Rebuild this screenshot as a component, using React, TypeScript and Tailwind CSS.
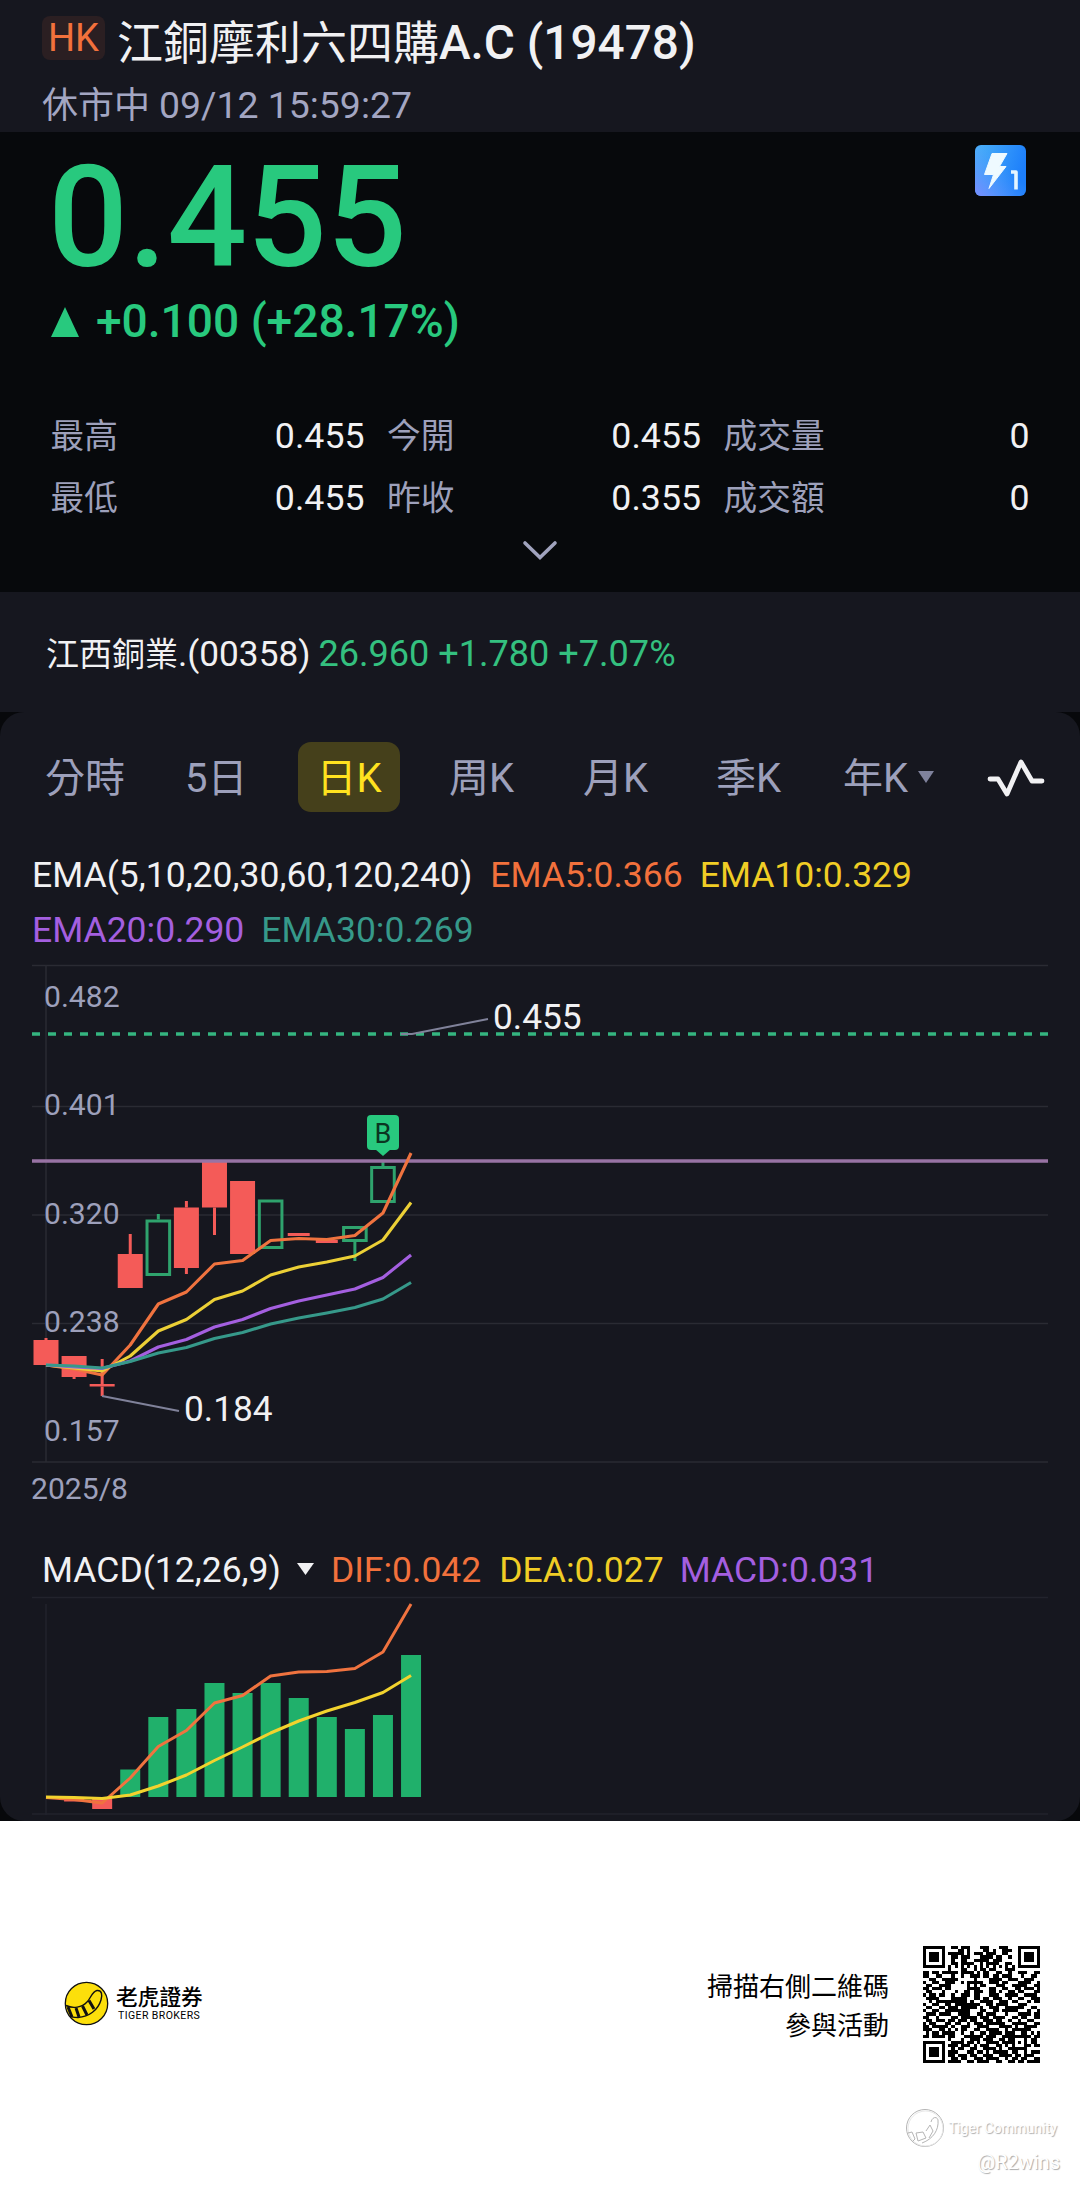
import React from 'react';

const STATS = [
  { label: '最高', value: '0.455' },
  { label: '今開', value: '0.455' },
  { label: '成交量', value: '0' },
  { label: '最低', value: '0.455' },
  { label: '昨收', value: '0.355' },
  { label: '成交額', value: '0' },
];

const STEP = 28.08;
const cx = (i: number) => 46 + i * STEP;

type Candle = { i: number; top: number; bottom: number; high?: number; low?: number; up?: boolean };

const CANDLES: Candle[] = [
  { i: 0, top: 1340, bottom: 1365, high: 1338 },
  { i: 1, top: 1356, bottom: 1377, low: 1379 },
  { i: 2, top: 1384, bottom: 1386.5, high: 1359, low: 1396 },
  { i: 3, top: 1254, bottom: 1288, high: 1234 },
  { i: 4, top: 1219.5, bottom: 1276, high: 1214, up: true },
  { i: 5, top: 1207.5, bottom: 1268, high: 1201, low: 1274 },
  { i: 6, top: 1162, bottom: 1207.5, low: 1235 },
  { i: 7, top: 1181, bottom: 1254 },
  { i: 8, top: 1199.5, bottom: 1249, up: true },
  { i: 9, top: 1233, bottom: 1236 },
  { i: 10, top: 1240, bottom: 1243 },
  { i: 11, top: 1226, bottom: 1242, low: 1261, up: true },
  { i: 12, top: 1166, bottom: 1203, high: 1161, up: true },
];

const EMA_LINES = [
  { color: '#f0733f', ys: [1365, 1369, 1375, 1345, 1304, 1292, 1264, 1260.5, 1240.5, 1238.5, 1239.5, 1235.5, 1213, 1153] },
  { color: '#ecd036', ys: [1365, 1368, 1371, 1356, 1331, 1319.5, 1299.5, 1291, 1275, 1267, 1262, 1256, 1240, 1202.5] },
  { color: '#a45fe0', ys: [1365, 1367, 1368.5, 1361, 1347, 1339.5, 1327, 1319.5, 1308.5, 1301, 1295, 1289, 1277.5, 1255] },
  { color: '#36998a', ys: [1365, 1366, 1368, 1361.5, 1353, 1347.5, 1338.5, 1332.5, 1324, 1318, 1313, 1307.5, 1299, 1282.5] },
];

const AXIS = [
  { y: 1006.5, text: '0.482' },
  { y: 1115, text: '0.401' },
  { y: 1224, text: '0.320' },
  { y: 1331.5, text: '0.238' },
  { y: 1440.5, text: '0.157' },
];

const MACD_TOPS = [1769.5, 1717, 1709, 1683, 1693, 1683, 1698, 1717, 1729, 1715, 1655];
const DIF = [1797.5, 1799.5, 1803, 1778, 1746.5, 1730.5, 1703, 1695.5, 1676, 1672, 1671.5, 1668.5, 1652, 1604];
const DEA = [1797, 1797.5, 1798.5, 1795, 1786, 1775, 1760.5, 1747, 1733, 1721, 1711, 1702.5, 1692.5, 1675.5];

const QR = [
  '1111111001101110001110001110001111111',
  '1000001000011010000110100111001000001',
  '1011101011111010111011100110001011101',
  '1011101001101110001111011001001011101',
  '1011101001001100111110111000001011101',
  '1000001001101111001011110011001000001',
  '1111111010101010101010101010101111111',
  '0000000010001100101101100011100000000',
  '1101101111101111010110011001001110011',
  '1100110001001001110110110111000100110',
  '0011001111100000100001111001110011100',
  '1001100111001011111001110110001111001',
  '0110011110000010101100011100111110011',
  '1101110110000011110001100110011011101',
  '0110001000100110111001101001101100011',
  '1011011001001110110001110011110011110',
  '0111100001111100110110111001001100111',
  '0010111111111101001111001110110001011',
  '1001100110111111110011011110001110000',
  '0110011011101111101001110011111100110',
  '1001100111111110001100110111110001001',
  '0111011110011110011011100010001111011',
  '1100100001101111101110111100110110011',
  '0110111011011101100111011001001001100',
  '1011000110110010111011111100111110011',
  '1101111101001110011110001111010011110',
  '1110011010101100110011110010111111000',
  '0101101111001001001101111011100110101',
  '1101111011000111111011100111111111011',
  '0000000010001001110111001101100010110',
  '1111111001111011010011110111101010110',
  '1000001011101110101110011010100011011',
  '1011101001011001100111101001111110000',
  '1011101011100011011010111110110010111',
  '1011101011011101100111001111011011100',
  '1000001001101100111011110010110110011',
  '1111111011110011011110011001101101111',
];

const points = (ys: number[]) => ys.map((y, i) => `${cx(i)},${y}`).join(' ');

function Header() {
  return (
    <header className="flex h-[132px] flex-col bg-[#16171f] pl-[42px]">
      <div className="flex h-[82px] items-center pt-[5px]">
        <span className="mt-[-11px] mr-[12px] flex h-[44px] w-[63px] items-center justify-center rounded-[8px] bg-[#2b1f22] text-[38px] text-[#f2713c]">
          HK
        </span>
        <h1 className="flex items-baseline text-[46px] leading-none whitespace-nowrap text-[#f1f1f3]">
          <span>江銅摩利六四購</span>
          <span className="text-[47.7px] font-medium">A.C (19478)</span>
        </h1>
      </div>
      <p className="-mt-[1px] flex items-baseline gap-[9px] text-[36px] leading-[48px] whitespace-nowrap text-[#a3a6c2]">
        <span>休市中</span>
        <span className="text-[37.4px]">09/12 15:59:27</span>
      </p>
    </header>
  );
}

function LevelBadge() {
  return (
    <svg className="mt-[13px] h-[51px] w-[51px]" viewBox="0 0 51 51">
      <defs>
        <linearGradient id="badge" x1="0" y1="0" x2="1" y2="0.3">
          <stop offset="0" stopColor="#4cb2f8" />
          <stop offset="1" stopColor="#1d7ffb" />
        </linearGradient>
        <linearGradient id="glow" x1="0" y1="1" x2="0.6" y2="0.4">
          <stop offset="0" stopColor="#7b8cff" />
          <stop offset="1" stopColor="#4f9dff" stopOpacity="0" />
        </linearGradient>
      </defs>
      <rect width="51" height="51" rx="6" fill="url(#badge)" />
      <rect width="51" height="51" rx="6" fill="url(#glow)" />
      <path d="M17 8.5H32L24.5 21.5H31L14 43.5L18.5 29.5H9.5Z" fill="#eefaff" stroke="#eefaff" strokeWidth="1" strokeLinejoin="round" />
      <path d="M36 27H41V44.5" fill="none" stroke="#e4f5ff" strokeWidth="3.6" strokeLinejoin="round" />
    </svg>
  );
}

function Quote() {
  return (
    <section className="flex h-[460px] flex-col bg-[#07090c] pr-[51px] pl-[51px]">
      <div className="flex h-[164px] justify-between pr-[3px]">
        <span className="-ml-[3px] text-[141px] leading-[172px] font-medium tracking-[-0.2px] text-[#28c97e]">0.455</span>
        <LevelBadge />
      </div>
      <div className="flex h-[52px] items-center gap-[17px] text-[#28c97e]">
        <svg className="h-[30px] w-[28px]" viewBox="0 0 28 30">
          <path d="M14 0L28 30H0Z" fill="currentColor" />
        </svg>
        <span className="text-[46.1px] font-medium">+0.100 (+28.17%)</span>
      </div>
      <div className="mt-[58px] -ml-[0.5px] grid grid-cols-[314px_314px_306px] gap-x-[22.5px]">
        {STATS.map((s) => (
          <div key={s.label} className="flex h-[62px] items-center justify-between">
            <span className="text-[33.7px] text-[#9da0bb]">{s.label}</span>
            <span className="text-[35.7px] text-[#f1f1f3]">{s.value}</span>
          </div>
        ))}
      </div>
      <svg className="mt-[10px] h-[22px] w-[38px] self-center" viewBox="0 0 38 22">
        <path d="M4 3L19 17.5L34 3" fill="none" stroke="#a0a3be" strokeWidth="3.6" strokeLinecap="round" />
      </svg>
    </section>
  );
}

function Underlying() {
  return (
    <section className="flex h-[120px] items-center bg-[#16171f] pt-[5px] pl-[46px] whitespace-nowrap">
      <div className="flex items-baseline text-[35.2px]">
        <span className="text-[33px] text-[#f1f1f3]">江西銅業</span>
        <span className="mr-[8px] text-[#f1f1f3]">.(00358)</span>
        <span className="text-[36.1px] text-[#34c07f]">26.960 +1.780 +7.07%</span>
      </div>
    </section>
  );
}

function Tabs() {
  return (
    <nav className="flex h-[129px] items-center pl-[45px] text-[40px] whitespace-nowrap text-[#9da0bb]">
      <span className="w-[140px] pt-[5px]">分時</span>
      <span className="w-[113px] pt-[5px]">5日</span>
      <span className="mr-[49px] flex h-[70px] w-[102px] items-center justify-center rounded-[13px] bg-[#45401b] pt-[5px] text-[#ffe21f]">日K</span>
      <span className="w-[134px] pt-[5px]">周K</span>
      <span className="w-[133px] pt-[5px]">月K</span>
      <span className="w-[127px] pt-[5px]">季K</span>
      <span className="w-[75px] pt-[5px]">年K</span>
      <svg className="h-[12px] w-[16px]" viewBox="0 0 16 12">
        <path d="M0 0H16L8 12Z" fill="#7f829c" />
      </svg>
      <svg className="mt-[3px] ml-[53px] h-[42px] w-[58px]" viewBox="0 0 58 42">
        <path d="M3 22H11L20 37L34 5L45 24H55" fill="none" stroke="#f1f1f3" strokeWidth="4.8" strokeLinecap="round" strokeLinejoin="round" />
      </svg>
    </nav>
  );
}

function PriceChart() {
  return (
    <svg className="block h-[560px] w-full" viewBox="0 952 1080 560">
      <g stroke="#2a2b33" strokeWidth="1.5">
        {[965.5, 1106.5, 1215, 1323.5, 1462].map((y) => (
          <line key={y} x1="32" x2="1048" y1={y} y2={y} />
        ))}
        <line x1="46" x2="46" y1="965" y2="1462" />
      </g>
      {CANDLES.map((c) => {
        const color = c.up ? '#2fa36d' : '#f45b58';
        const flat = c.i === 9 || c.i === 10;
        const w = flat ? 22 : 25;
        return (
          <g key={c.i}>
            {c.high && <line x1={cx(c.i)} x2={cx(c.i)} y1={c.high} y2={c.top} stroke={color} strokeWidth="3" />}
            {c.low && <line x1={cx(c.i)} x2={cx(c.i)} y1={c.bottom} y2={c.low} stroke={color} strokeWidth="3" />}
            {c.up ? (
              <rect x={cx(c.i) - 11.3} y={c.top + 1.5} width="22.6" height={c.bottom - c.top - 3} fill="none" stroke={color} strokeWidth="3" />
            ) : (
              <rect x={cx(c.i) - w / 2} y={c.top} width={w} height={c.bottom - c.top} fill={color} />
            )}
          </g>
        );
      })}
      <line x1="32" x2="1048" y1="1161" y2="1161" stroke="#9873a4" strokeWidth="3.6" />
      {EMA_LINES.map((l) => (
        <polyline key={l.color} points={points(l.ys)} fill="none" stroke={l.color} strokeWidth="3.1" strokeLinejoin="round" />
      ))}
      <line x1="32" x2="1048" y1="1034" y2="1034" stroke="#35b580" strokeWidth="3.4" strokeDasharray="8 8" />
      <path d="M401 1034H412L488 1019M102 1396L179 1411" fill="none" stroke="#80829a" strokeWidth="2" />
      <rect x="367" y="1115" width="32" height="35" rx="4" fill="#28c97e" />
      <path d="M375 1149H391L383 1156Z" fill="#28c97e" />
      <text x="383" y="1142.5" textAnchor="middle" fontSize="27" fill="#0b3521">B</text>
      <g fontSize="30.1" fill="#9da0bb">
        {AXIS.map((a) => (
          <text key={a.text} x="44" y={a.y}>{a.text}</text>
        ))}
        <text x="31" y="1498.5">2025/8</text>
      </g>
      <g fontSize="35.3" fill="#f1f1f3">
        <text x="493" y="1028.5">0.455</text>
        <text x="184" y="1420.5">0.184</text>
      </g>
    </svg>
  );
}

function MacdChart() {
  return (
    <svg className="block h-[228px] w-full" viewBox="0 1593 1080 228">
      <g stroke="#22232c" strokeWidth="1.5">
        <line x1="32" x2="1048" y1="1597.5" y2="1597.5" />
        <line x1="32" x2="1048" y1="1814" y2="1814" />
        <line x1="46" x2="46" y1="1604" y2="1815" />
      </g>
      <rect x={cx(1) - 10} y="1797" width="20" height="4.5" fill="#f45b58" />
      <rect x={cx(2) - 10} y="1797" width="20" height="12" fill="#f45b58" />
      {MACD_TOPS.map((top, i) => (
        <rect key={i} x={cx(i + 3) - 10} y={top} width="20" height={1797 - top} fill="#20b06b" />
      ))}
      <polyline points={points(DIF)} fill="none" stroke="#f0733f" strokeWidth="3" strokeLinejoin="round" />
      <polyline points={points(DEA)} fill="none" stroke="#f2d32e" strokeWidth="3" strokeLinejoin="round" />
    </svg>
  );
}

function ChartPanel() {
  return (
    <div className="bg-[#07080b]">
      <section className="h-[1109px] overflow-hidden rounded-[24px] bg-[#16171f]">
        <Tabs />
        <div className="flex h-[111px] flex-wrap content-start gap-x-[18px] pt-[7px] pl-[32px] text-[35.5px] leading-[55px] whitespace-nowrap">
          <span className="text-[#f1f1f3]">EMA(5,10,20,30,60,120,240)</span>
          <span className="-mr-[1px] text-[#f2713c]">EMA5:0.366</span>
          <span className="mr-[100px] text-[#f0cd25]">EMA10:0.329</span>
          <span className="-mr-[1px] text-[#a45fe0]">EMA20:0.290</span>
          <span className="text-[#36998a]">EMA30:0.269</span>
        </div>
        <PriceChart />
        <div className="flex h-[81px] items-center gap-[17px] pt-[36px] pl-[42px] text-[35.5px] leading-[45px] whitespace-nowrap">
          <span className="-mr-[1px] text-[#f1f1f3]">MACD(12,26,9)</span>
          <svg className="mb-[3px] h-[12px] w-[17px]" viewBox="0 0 17 12">
            <path d="M0 0H17L8.5 12Z" fill="#f1f1f3" />
          </svg>
          <span className="text-[#f2713c]">DIF:0.042</span>
          <span className="ml-[1px] text-[#f0cd25]">DEA:0.027</span>
          <span className="-ml-[1px] text-[#a45fe0]">MACD:0.031</span>
        </div>
        <MacdChart />
      </section>
    </div>
  );
}

function QrCode() {
  return (
    <svg className="h-[117px] w-[117px]" viewBox="0 0 37 37" shapeRendering="crispEdges">
      {QR.map((row, y) =>
        row.split('').map((cell, x) => (cell === '1' ? <rect key={`${x}-${y}`} x={x} y={y} width="1" height="1" fill="#000" /> : null))
      )}
    </svg>
  );
}

function TigerLogo() {
  return (
    <svg className="h-[45px] w-[45px]" viewBox="0 0 45 45">
      <circle cx="22.5" cy="22.5" r="21.2" fill="#fcdf0b" stroke="#111" strokeWidth="1.3" />
      <path
        d="M2 24.5C9 28 18 26.5 23 21C27 17 28 10.5 33 9.5C38 9 38.5 14 37 19C34 29 25 36 14 36.5C10 36.5 7 36 6 35"
        fill="none"
        stroke="#111"
        strokeWidth="1.4"
      />
      <path d="M4 26L8 36M12 27L15 36M18.500 25L23 34M25 19.500L30 28" fill="none" stroke="#111" strokeWidth="3" />
    </svg>
  );
}

function Footer() {
  return (
    <footer className="h-[367px] bg-white text-black">
      <div className="flex h-[242px] items-start pt-[125px] pr-[40px] pl-[64px]">
        <div className="mt-[35px] flex items-center gap-[7px]">
          <TigerLogo />
          <div className="flex flex-col pt-[1px]">
            <span className="text-[21.7px] leading-[24px] font-medium">老虎證券</span>
            <span className="pl-[2px] text-[10.5px] leading-[12px] tracking-[0.42px]">TIGER BROKERS</span>
          </div>
        </div>
        <p className="mt-[22px] mr-[34px] ml-auto text-right text-[26px] leading-[39px]">
          掃描右側二維碼
          <br />
          參與活動
        </p>
        <QrCode />
      </div>
      <div className="flex flex-col items-end pt-[45px] pr-[20px] text-white">
        <div className="flex items-center gap-[4px] pr-[3px]">
          <svg className="h-[40px] w-[40px]" viewBox="0 0 40 40" fill="none" strokeWidth="1">
            <circle cx="20" cy="20" r="18.5" stroke="#b5b5b5" />
            <circle cx="20.5" cy="20.5" r="17.5" stroke="#e8e8e8" />
            <path d="M3 25L7 24L10 31L8 33M11 25L18 24L21 30L13 33ZM21 23L25 17L28 23L24 30M26 14C27 9 32 8 33 12C34 22 28 31 17 35" stroke="#b5b5b5" />
          </svg>
          <span className="text-[14.2px] leading-[40px] [text-shadow:1px_1px_1px_#aaaaaa]">Tiger Community</span>
        </div>
        <span className="text-[20px] leading-[29px] [text-shadow:1px_1px_1px_#aaaaaa]">@R2wins</span>
      </div>
    </footer>
  );
}

export default function App() {
  return (
    <div className="w-[1080px] overflow-hidden bg-white font-[Roboto,'Noto_Sans_CJK_TC',sans-serif]">
      <Header />
      <Quote />
      <Underlying />
      <ChartPanel />
      <Footer />
    </div>
  );
}
